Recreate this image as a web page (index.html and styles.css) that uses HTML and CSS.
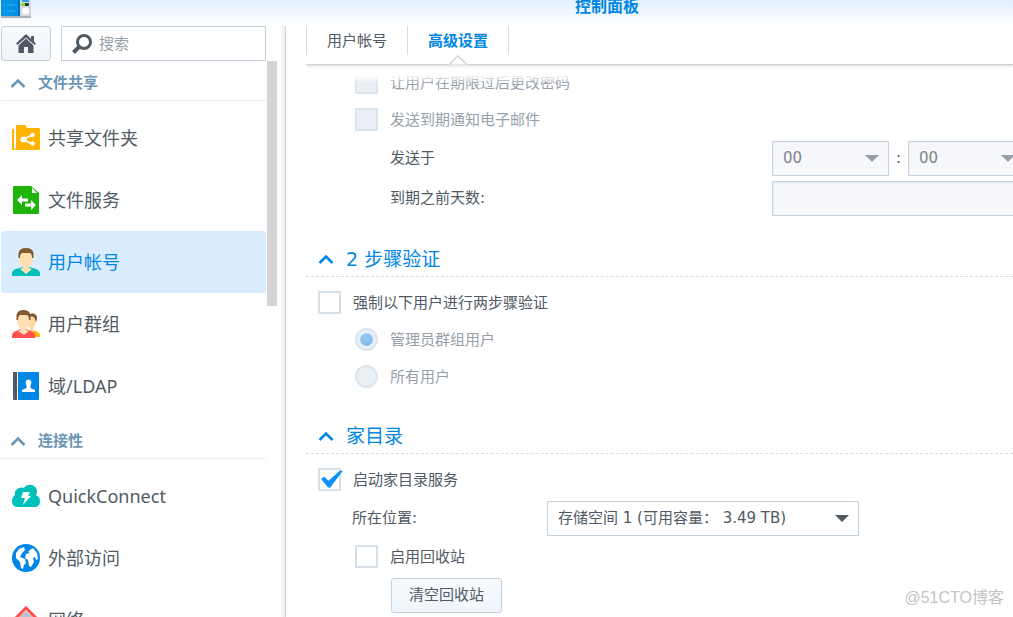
FILE: index.html
```html
<!DOCTYPE html>
<html lang="zh-CN">
<head>
<meta charset="utf-8">
<title>控制面板</title>
<link rel="stylesheet" href="styles.css">
</head>
<body>
<div class="window">
  <header class="titlebar">
    <svg class="app-icon" width="30" height="18" viewBox="0 0 30 18" aria-hidden="true">
      <rect width="30" height="18" fill="#a9b3ba"/>
      <rect width="18" height="16" fill="#0492e6"/><rect x="17" width="2" height="16" fill="#0a6cb4"/>
      <rect x="19" width="11" height="16" fill="#d3dade"/>
      <path d="M2 5h2M6 5h8M2 11h2M6 11h8" stroke="#3fb1f4"/>
      <rect x="21" width="7" height="2" fill="#2aa5ea"/><rect x="20" y="3" width="8" height="3" rx="1" fill="#333"/><rect x="20" y="3" width="4" height="3" fill="#8be01e"/>
      <circle cx="24.500" cy="11" r="3.500" fill="#fff"/>
    </svg>
    <h1 class="title">控制面板</h1>
  </header>
  <div class="body">
    <aside class="sidebar">
      <div class="toolbar">
        <button class="home" type="button" aria-label="主页">
          <svg width="22" height="22" viewBox="0 0 22 22"><path d="M11 1 21 10.500 19.500 12 11 4.500 2.500 12 1 10.500Z" fill="#505a66"/><path d="M11 5.500 18.500 12.500V20H13v-6H9v6H3.500v-7.500Z" fill="#505a66"/><path d="M16 3h3v6l-3-3Z" fill="#505a66"/></svg>
        </button>
        <label class="search">
          <svg width="22" height="22" viewBox="0 0 22 22" fill="none" stroke="#505a66"><circle cx="13" cy="9" r="6.500" stroke-width="3"/><path d="m8.500 13.500-6 6" stroke-width="4"/></svg>
          <input type="text" placeholder="搜索" aria-label="搜索">
        </label>
      </div>
      <div class="scroller">
        <nav class="nav">
          <h2 class="group"><svg class="chevron" viewBox="0 0 16 10"><path d="m1.500 9 6.500-6.500L14.500 9"/></svg>文件共享</h2>
          <ul class="items">
            <li><a class="item" href="#share"><svg class="icon" viewBox="0 0 28 28"><path d="M0 5h2v21H0ZM4 2q0-1 1-1h8q1 0 1 1l1 2h12q1 0 1 1v20q0 1-1 1H2l2-2Z" fill="#ffb400"/><path d="m11 15.500 9-4.500M11 15.500l9 4.500" stroke="#fff" stroke-width="1.800"/><circle cx="11.500" cy="15.500" r="3" fill="#fff"/><circle cx="20.500" cy="11" r="2.200" fill="#fff"/><circle cx="20.500" cy="19.500" r="2.200" fill="#fff"/></svg>共享文件夹</a></li>
            <li><a class="item" href="#services"><svg class="icon" viewBox="0 0 28 28"><path d="M2 0h17l8 7v20q0 1-1 1H2q-1 0-1-1V1q0-1 1-1Z" fill="#1fb40c"/><path d="M20 2v5h5Z" fill="#fff"/><path d="m5 14 5-5v3.500h6v3h-6V19ZM24 19l-5-5v3.500h-6v3h6V24Z" fill="#fff"/></svg>文件服务</a></li>
            <li><a class="item active" href="#user" aria-current="page"><svg class="icon" viewBox="0 0 28 28"><path d="M0 28v-2q0-4 4-5l7-2h6l7 2q4 1 4 5v2Z" fill="#00bfb8"/><path d="M11 16h6v4l3 1-6 5-6-5 3-1Z" fill="#ffe0b2"/><path d="M7 6q0-5 7-5t7 5v5q0 7-7 8-7-1-7-8Z" fill="#ffe0b2"/><path d="M6.500 10V5q1-5 7.500-5t7.500 5v5H20q0-4-2-5h-8q-2 1-2 5Z" fill="#805a30"/></svg>用户帐号</a></li>
            <li><a class="item" href="#group"><svg class="icon" viewBox="0 0 28 28"><path d="M20 20q8 2 8 5v2h-7Z" fill="#ffb400"/><path d="M15 7q3-5 8-2 2 2 1 7t-3 6l1 4-3 2Z" fill="#ffd7a1"/><path d="M16 6q4-5 8-1 2 2 0 7l-2-5Z" fill="#805a30"/><path d="M0 28v-2q0-4 4-5l5-2h5l5 2q4 1 4 5v2Z" fill="#ff5050"/><path d="M9 16h5v4l3 1-5 4-6-4 3-1Z" fill="#ffe0b2"/><path d="M5 6q0-5 6.500-5T18 6v5q0 7-6.500 8Q5 18 5 11Z" fill="#ffe0b2"/><path d="M4.500 10V5q1-5 7-5t7 5v5H17q0-4-2-5H8q-2 1-2 5Z" fill="#805a30"/></svg>用户群组</a></li>
            <li><a class="item" href="#ldap"><svg class="icon" viewBox="0 0 28 28"><path d="M1 0h4v28H2q-1 0-1-1Z" fill="#505a66"/><path d="M6 0h20q1 0 1 1v26q0 1-1 1H6Z" fill="#0086e5"/><path d="M10 20v-2l4.500-2v-2q-2.500-6 2-6.500 4.500.500 2 6.500v2l4.500 2v2Z" fill="#fff"/></svg>域/LDAP</a></li>
          </ul>
          <h2 class="group"><svg class="chevron" viewBox="0 0 16 10"><path d="m1.500 9 6.500-6.500L14.500 9"/></svg>连接性</h2>
          <ul class="items">
            <li><a class="item" href="#quickconnect"><svg class="icon" viewBox="0 0 28 28"><path d="M6 25q-6 0-6-6 0-4 3-6-1-5 4-7 3-1 5 0 3-4 8-3 5 2 5 6 0 2-1 4 4 2 4 6 0 6-6 6Z" fill="#00bfb8"/><path d="M11 10h7l-2 4h3l-8 9 2-7H9Z" fill="#fff"/></svg>QuickConnect</a></li>
            <li><a class="item" href="#external"><svg class="icon" viewBox="0 0 28 28"><circle cx="14" cy="14" r="14" fill="#0086e5"/><path d="m4 9 3-4 5-2 1 3-3 3-2 4 5 2 1 4-2 2-1 4-2-1-1-6-4-4ZM18 6l3-2 4 5 1 6-2 1-1-3-2 1 1 4-3 5-2-1-1-6-3-2 1-4 4-1-2-1Z" fill="#fff"/></svg>外部访问</a></li>
            <li><a class="item" href="#network"><svg class="icon" viewBox="0 0 28 28"><path d="m14 5 11 10v13H3V15Z" fill="#b8c3cd"/><path d="M1 15 14 2l13 13" fill="none" stroke="#ff5050" stroke-width="3"/></svg>网络</a></li>
          </ul>
        </nav>
        <div class="thumb"></div>
      </div>
    </aside>
    <main class="main">
      <div class="tabs" role="tablist">
        <button class="tab" type="button" role="tab">用户帐号</button>
        <button class="tab selected" type="button" role="tab" aria-selected="true">高级设置<svg class="notch" width="18" height="10" viewBox="0 0 18 10"><path d="M0 9.500 9 1l9 8.500" fill="#fff" stroke="#d0d3d6" stroke-width="1.500"/></svg></button>
      </div>
      <form class="content">
        <label class="row indent muted"><input class="check" type="checkbox" disabled>让用户在期限过后更改密码</label>
        <label class="row indent muted"><input class="check" type="checkbox" disabled>发送到期通知电子邮件</label>
        <div class="row field deep">
          <label for="hour">发送于</label>
          <span class="select short"><select id="hour" disabled><option>00</option></select></span>
          <span class="colon">:</span>
          <span class="select short"><select aria-label="分钟" disabled><option>00</option></select></span>
        </div>
        <div class="row field deep"><label for="days">到期之前天数:</label><input class="text" id="days" type="text" disabled></div>

        <h2 class="heading"><svg class="chevron" viewBox="0 0 16 10"><path d="m1.500 9 6.500-6.500L14.500 9"/></svg>2 步骤验证</h2>
        <label class="row"><input class="check" type="checkbox">强制以下用户进行两步骤验证</label>
        <label class="row indent muted"><input class="check radio" type="radio" name="scope" checked disabled>管理员群组用户</label>
        <label class="row indent muted"><input class="check radio" type="radio" name="scope" disabled>所有用户</label>

        <h2 class="heading"><svg class="chevron" viewBox="0 0 16 10"><path d="m1.500 9 6.500-6.500L14.500 9"/></svg>家目录</h2>
        <label class="row"><input class="check" type="checkbox" checked>启动家目录服务</label>
        <div class="row field"><label for="volume">所在位置:</label><span class="select"><select id="volume"><option>存储空间 1 (可用容量： 3.49 TB)</option></select></span></div>
        <label class="row indent"><input class="check" type="checkbox">启用回收站</label>
        <div class="row field deep"><button class="button" type="button">清空回收站</button></div>
      </form>
    </main>
  </div>
  <div class="watermark">@51CTO博客</div>
</div>
</body>
</html>
```
FILE: styles.css
```css
* { box-sizing: border-box; }

body {
  margin: 0;
  background: #fff;
  color: #505a64;
  font: 15px/20px "DejaVu Sans", "Noto Sans CJK SC", sans-serif;
}

button, input, select { font: inherit; color: inherit; }
h1, h2, ul { margin: 0; padding: 0; list-style: none; }
svg { display: block; flex: none; }

.window {
  position: relative;
  display: flex;
  flex-direction: column;
  height: 100vh;
  overflow: hidden;
}

.titlebar {
  display: grid;
  grid-template-columns: 200px 1fr;
  flex: none;
  height: 26px;
  padding-left: 1px;
  background: linear-gradient(#e0f0fd, #fff);
}
.title {
  color: #0086e5;
  font-size: 16px;
  line-height: 14px;
  text-align: center;
}

.body { display: flex; flex: 1; min-height: 0; }

.sidebar {
  display: flex;
  flex: none;
  flex-direction: column;
  width: 286px;
  padding-left: 1px;
  border-right: 1px solid #cfd1d4;
  background: linear-gradient(to left, #ececee, #fff 5px);
}
.toolbar {
  display: flex;
  flex: none;
  gap: 10px;
  height: 35px;
  padding-right: 19px;
}
.home {
  display: flex;
  align-items: center;
  justify-content: center;
  width: 50px;
  border: 1px solid #c3d0de;
  border-radius: 3px;
  background: linear-gradient(#f7fafd, #eff5fa);
}
.search {
  display: flex;
  flex: 1;
  align-items: center;
  gap: 6px;
  padding-left: 9px;
  border: 1px solid #c3d0de;
}
.search input {
  width: 100%;
  min-width: 0;
  padding: 0;
  border: 0;
  outline: 0;
  background: none;
}
.search input::placeholder { color: #96a0aa; opacity: 1; }

.scroller { display: flex; flex: 1; min-height: 0; overflow: hidden; }
.nav { flex: none; width: 265px; padding-top: 5px; }
.thumb { width: 10px; height: 245px; margin-left: 1px; background: #d3d5d7; }
.group {
  display: flex;
  align-items: center;
  gap: 12px;
  height: 35px;
  padding-left: 9px;
  border-bottom: 1px solid #e6edf4;
  color: #6b96b6;
  font-size: 15px;
}
.chevron {
  width: 16px;
  height: 10px;
  fill: none;
  stroke: currentColor;
  stroke-width: 2.5;
}
.items { padding: 6px 0 7px; }
.item {
  display: flex;
  align-items: center;
  gap: 8px;
  height: 62px;
  padding-left: 11px;
  border-radius: 3px;
  color: #505a64;
  font: 18px/24px "Noto Sans", "Noto Sans CJK SC", sans-serif;
  text-decoration: none;
}
.item.active { background: #d9edff; color: #0086e5; }
.icon { width: 28px; height: 28px; }

.main {
  display: flex;
  flex: 1;
  flex-direction: column;
  min-width: 0;
  padding-left: 20px;
}
.tabs {
  position: relative;
  z-index: 2;
  display: flex;
  flex: none;
  height: 39px;
  padding-bottom: 9px;
  border-bottom: 1px solid #d0d3d6;
  box-shadow: 0 1px 3px #d8dadc;
  clip-path: inset(0 0 -6px);
}
.tab {
  position: relative;
  padding: 0 20px;
  border: 0;
  border-left: 1px solid #cfdeea;
  background: none;
}
.tab.selected {
  border-right: 1px solid #cfdeea;
  color: #0086e5;
  font-weight: bold;
}
.notch { position: absolute; bottom: -10px; left: 50%; margin-left: -9px; }

.content {
  position: relative;
  flex: 1;
  min-height: 0;
  margin-top: -1px;
  overflow: hidden;
}
.content::before {
  content: "";
  position: absolute;
  z-index: 1;
  inset: 0 0 auto;
  height: 19px;
  background: linear-gradient(#fff 11px, #fff0);
}
.row {
  display: flex;
  align-items: center;
  gap: 12px;
  height: 37px;
  padding-left: 12px;
}
.indent { padding-left: 49px; }
.muted { color: #96a0aa; }
.field { gap: 0; height: 40px; padding-left: 46px; }
.deep { padding-left: 84px; }
.field label { flex: none; width: 195px; }
.deep label { width: 382px; }

.check {
  position: relative;
  flex: none;
  width: 23px;
  height: 23px;
  margin: 0;
  border: 2px solid #d7e0e8;
  background: #fff;
  appearance: none;
}
.check:disabled { border-color: #dbe5ee; background: #e9eff4; }
.check:not(.radio):checked::after {
  content: "";
  position: absolute;
  top: 0;
  left: 1px;
  width: 22px;
  height: 18px;
  background: #0e93f5;
  clip-path: polygon(0 48%, 15% 38%, 34% 60%, 85% 4%, 100% 4%, 40% 100%, 30% 94%);
}
.radio { border-radius: 50%; }
.radio:checked::after {
  content: "";
  position: absolute;
  inset: 3px;
  border-radius: 50%;
  background: linear-gradient(#94cdf8, #85bae6);
}

.select { position: relative; flex: none; width: 312px; height: 35px; }
.short { width: 117px; }
.select::after {
  content: "";
  position: absolute;
  top: 14px;
  right: 10px;
  border: 7px solid transparent;
  border-top-color: #505a64;
  border-bottom: 0;
  pointer-events: none;
}
.select select {
  width: 100%;
  height: 100%;
  padding: 0 10px;
  border: 1px solid #c3d0de;
  border-radius: 0;
  background: #fff;
  appearance: none;
}
.short::after { border-top-color: #96a0aa; }
.select select:disabled, .text:disabled {
  background: #f5f7fa;
  color: #808487;
  opacity: 1;
}
.colon { flex: none; width: 19px; text-align: center; }
.text {
  flex: none;
  width: 253px;
  height: 35px;
  border: 1px solid #c3d0de;
  box-shadow: inset 0 1px 2px #e2e6ea;
}

.heading {
  display: flex;
  align-items: center;
  gap: 12px;
  height: 35px;
  margin: 24px 0 7px;
  padding-left: 12px;
  border-bottom: 1px dashed #cfdeeb;
  color: #0086e5;
  font-size: 19px;
  font-weight: normal;
}

.button {
  height: 35px;
  margin-left: 1px;
  padding: 0 17px;
  border: 1px solid #c3d0de;
  border-radius: 3px;
  background: linear-gradient(#f7fafd, #eff5fa);
}

.watermark {
  position: absolute;
  right: 9px;
  bottom: 8px;
  color: #c4c4c4;
  font: 16px/22px "Liberation Sans", "Noto Sans CJK SC", sans-serif;
  pointer-events: none;
}
```
